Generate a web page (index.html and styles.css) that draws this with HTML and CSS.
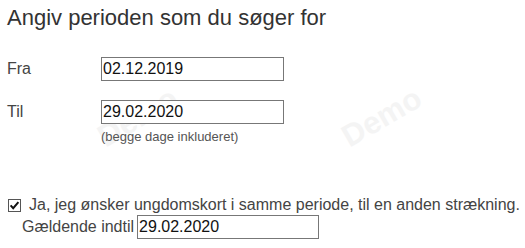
FILE: index.html
```html
<!DOCTYPE html>
<html>
<head>
<meta charset="utf-8">
<link rel="stylesheet" href="styles.css">
</head>
<body>
<div class="page">
  <h1 class="title">Angiv perioden som du søger for</h1>
  <div class="row row-fra">
    <span class="label">Fra</span>
    <span class="input">02.12.2019</span>
  </div>
  <div class="row row-til">
    <span class="label">Til</span>
    <span class="input">29.02.2020</span>
  </div>
  <div class="hint">(begge dage inkluderet)</div>
  <div class="check-row">
    <span class="checkbox">
      <svg width="13" height="13" viewBox="0 0 13 13"><rect x="0.5" y="0.5" width="12" height="12" fill="#fff" stroke="#555"/><path d="M2.6 6.4 L5.2 9.2 L10.4 3.2" fill="none" stroke="#111" stroke-width="2"/></svg>
    </span>
    <span class="check-text">Ja, jeg ønsker ungdomskort i samme periode, til en anden strækning.</span>
  </div>
  <div class="valid-row">
    <span class="valid-label">Gældende indtil</span>
    <span class="input input-valid">29.02.2020</span>
  </div>
  <span class="wm wm1">Demo</span>
  <span class="wm wm2">Demo</span>
</div>
</body>
</html>
```

FILE: styles.css
```css
html, body {
  margin: 0;
  padding: 0;
  background: #fff;
}
body {
  font-family: "Liberation Sans", Arial, sans-serif;
  color: #333;
}
.page {
  position: relative;
  width: 525px;
  height: 248px;
  overflow: hidden;
  padding: 0 0 0 7px;
  box-sizing: border-box;
}
.title {
  margin: 0;
  padding-top: 5px;
  font-size: 22px;
  font-weight: normal;
  line-height: 25px;
  color: #333;
}
.row {
  display: flex;
  align-items: center;
  height: 24px;
}
.row-fra { margin-top: 27px; }
.row-til { margin-top: 19px; }
.label {
  width: 94px;
  font-size: 16px;
  color: #444;
}
.input {
  position: relative;
  z-index: 2;
  display: flex;
  align-items: center;
  box-sizing: border-box;
  width: 183px;
  height: 24px;
  border: 1px solid #777;
  padding-left: 1px;
  font-size: 16px;
  color: #111;
  background: #fff;
}
.hint {
  position: relative;
  z-index: 2;
  margin: 5px 0 0 94px;
  font-size: 13px;
  line-height: 16px;
  color: #555;
}
.check-row {
  display: flex;
  align-items: center;
  margin-top: 50px;
  padding-left: 1px;
  height: 20px;
}
.checkbox {
  display: flex;
  width: 13px;
  height: 13px;
  margin-right: 8px;
}
.check-text {
  font-size: 16px;
  color: #444;
}
.valid-row {
  display: flex;
  align-items: center;
  margin-top: 0;
  padding-left: 15px;
  height: 24px;
}
.valid-label {
  font-size: 16px;
  color: #444;
  margin-right: 3px;
}
.input-valid {
  width: 182px;
}
.wm {
  position: absolute;
  z-index: 1;
  font-size: 31px;
  line-height: 31px;
  font-weight: bold;
  color: #f4f4f4;
  transform: rotate(-30deg);
  transform-origin: left bottom;
}
.wm1 { left: 352px; top: 121px; }
.wm2 { left: 108px; top: 121px; }
```
